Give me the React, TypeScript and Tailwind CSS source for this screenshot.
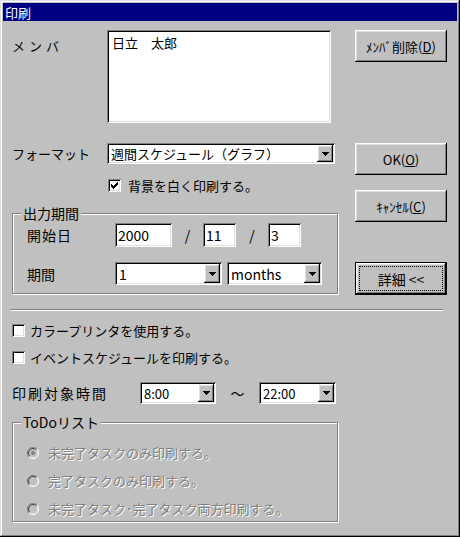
import React from 'react';

const raised =
  'shadow-[inset_-1px_-1px_#000,inset_1px_1px_#fff,inset_-2px_-2px_#808080,inset_2px_2px_#dfdfdf]';
const sunken =
  'shadow-[inset_1px_1px_#808080,inset_-1px_-1px_#fff,inset_2px_2px_#000,inset_-2px_-2px_#dfdfdf]';
const disabledText = 'text-[#808080] [text-shadow:1px_1px_#fff]';

function Arrow() {
  return (
    <svg width="7" height="4" viewBox="0 0 7 4" shapeRendering="crispEdges">
      <path d="M0 0h7v1H0z M1 1h5v1H1z M2 2h3v1H2z M3 3h1v1H3z" fill="#000" />
    </svg>
  );
}

function Combo({ value, className }: { value: string; className: string }) {
  return (
    <div className={`${className} bg-white ${sunken} flex items-stretch p-[2px]`}>
      <span className="flex-1 flex items-center pl-[2px] whitespace-nowrap overflow-hidden">{value}</span>
      <div className={`w-[16px] bg-[#c0c0c0] ${raised} flex items-center justify-center`}>
        <Arrow />
      </div>
    </div>
  );
}

function TextBox({ value, className }: { value: string; className: string }) {
  return (
    <div className={`${className} h-[24px] bg-white ${sunken} flex items-center pl-[3px]`}>{value}</div>
  );
}

function Check({ checked }: { checked?: boolean }) {
  return (
    <div className={`w-[13px] h-[13px] shrink-0 bg-white ${sunken} flex items-center justify-center`}>
      {checked && (
        <svg width="7" height="7" viewBox="0 0 7 7" shapeRendering="crispEdges">
          <path
            d="M0 2h1v3H0z M1 3h1v3H1z M2 4h1v3H2z M3 3h1v3H3z M4 2h1v3H4z M5 1h1v3H5z M6 0h1v3H6z"
            fill="#000"
          />
        </svg>
      )}
    </div>
  );
}

function Radio({ selected }: { selected?: boolean }) {
  return (
    <svg width="12" height="12" viewBox="0 0 12 12" className="shrink-0">
      <circle cx="6" cy="6" r="5.5" fill="#c0c0c0" />
      <path d="M10 2A5.5 5.5 0 0 0 2 10" stroke="#808080" fill="none" strokeWidth="1" />
      <path d="M2 10A5.5 5.5 0 0 0 10 2" stroke="#fff" fill="none" strokeWidth="1" />
      <path d="M9.2 2.8A4.5 4.5 0 0 0 2.8 9.2" stroke="#404040" fill="none" strokeWidth="1" />
      <path d="M2.8 9.2A4.5 4.5 0 0 0 9.2 2.8" stroke="#dfdfdf" fill="none" strokeWidth="1" />
      {selected && <circle cx="6" cy="6" r="2" fill="#808080" />}
    </svg>
  );
}

function Button({ children, className }: { children: React.ReactNode; className?: string }) {
  return (
    <div className={`w-[92px] h-[32px] ${raised} flex items-center justify-center ${className ?? ''}`}>
      {children}
    </div>
  );
}

function Group({ title, className, children }: { title: string; className: string; children: React.ReactNode }) {
  return (
    <div className={`relative border border-[#808080] shadow-[inset_1px_1px_#fff,1px_1px_#fff] ${className}`}>
      <span className="absolute -top-[8px] left-[8px] px-[2px] bg-[#c0c0c0] text-[14px]">{title}</span>
      {children}
    </div>
  );
}

export default function App() {
  return (
    <div className="w-[460px] h-[537px] bg-[#c0c0c0] p-[3px] shadow-[inset_-1px_-1px_#000,inset_1px_1px_#dfdfdf,inset_-2px_-2px_#808080,inset_2px_2px_#fff] font-['Noto_Sans_CJK_JP',sans-serif] text-black text-[13px] leading-none flex flex-col">
      <div className="h-[18px] bg-[#000080] text-white text-[13px] flex items-center pl-[2px]">印刷</div>

      <div className="flex-1 pl-[9px] pt-[9px]">
        {/* upper part: fields + buttons */}
        <div className="flex">
          <div className="w-[326px] flex flex-col">
            <div className="flex">
              <div className="w-[95px] pt-[9px] tracking-[4px]">メンバ</div>
              <div className={`w-[224px] h-[93px] bg-white ${sunken} pl-[5px] pt-[6px]`}>日立　太郎</div>
            </div>
            <div className="flex items-center mt-[20px]">
              <div className="w-[95px]">フォーマット</div>
              <Combo value="週間スケジュール（グラフ）" className="w-[228px] h-[21px]" />
            </div>
            <div className="flex items-center mt-[15px] ml-[96px] gap-[7px]">
              <Check checked />
              <span>背景を白く印刷する。</span>
            </div>
            <Group title="出力期間" className="mt-[21px] h-[81px]">
              <div className="pl-[14px] pt-[9px] flex flex-col gap-[15px] text-[14px]">
                <div className="flex items-center">
                  <div className="w-[88px] tracking-[1px]">開始日</div>
                  <TextBox value="2000" className="w-[57px]" />
                  <div className="w-[31px] text-center">/</div>
                  <TextBox value="11" className="w-[33px]" />
                  <div className="w-[32px] text-center">/</div>
                  <TextBox value="3" className="w-[33px]" />
                </div>
                <div className="flex items-center">
                  <div className="w-[88px]">期間</div>
                  <Combo value="1" className="w-[107px] h-[23px]" />
                  <Combo value="months" className="w-[95px] h-[23px] ml-[5px]" />
                </div>
              </div>
            </Group>
          </div>

          <div className="ml-[17px] w-[92px] flex flex-col">
            <Button>
              ﾒﾝﾊﾞ削除(<u>D</u>)
            </Button>
            <Button className="mt-[81px]">
              OK(<u>O</u>)
            </Button>
            <Button className="mt-[15px]">
              ｷｬﾝｾﾙ(<u>C</u>)
            </Button>
            <div className="mt-[40px] w-[92px] h-[33px] flex p-[4px] shadow-[inset_0_0_0_1px_#000,inset_-2px_-2px_#000,inset_2px_2px_#fff,inset_-3px_-3px_#808080,inset_3px_3px_#dfdfdf]">
              <div className="flex-1 border border-dotted border-black flex items-center justify-center text-[14px]">
                詳細 &lt;&lt;
              </div>
            </div>
          </div>
        </div>

        <div className="mt-[14px] -ml-[2px] w-[433px] h-[2px] border-t border-[#808080] border-b border-b-white" />

        <div className="flex items-center gap-[5px] mt-[13px]">
          <Check />
          <span>カラープリンタを使用する。</span>
        </div>
        <div className="flex items-center gap-[5px] mt-[14px]">
          <Check />
          <span>イベントスケジュールを印刷する。</span>
        </div>

        <div className="flex items-center mt-[18px]">
          <div className="w-[128px] text-[14px] tracking-[2px]">印刷対象時間</div>
          <Combo value="8:00" className="w-[76px] h-[22px]" />
          <div className="w-[43px] text-center text-[14px]">〜</div>
          <Combo value="22:00" className="w-[77px] h-[22px]" />
        </div>

        <Group title="ToDoリスト" className="mt-[18px] w-[326px] h-[100px]">
          <div className={`pl-[14px] pt-[23px] flex flex-col gap-[15px] ${disabledText}`}>
            <div className="flex items-center gap-[9px]">
              <Radio selected />
              <span>未完了タスクのみ印刷する。</span>
            </div>
            <div className="flex items-center gap-[9px]">
              <Radio />
              <span>完了タスクのみ印刷する。</span>
            </div>
            <div className="flex items-center gap-[9px]">
              <Radio />
              <span>未完了タスク･完了タスク両方印刷する。</span>
            </div>
          </div>
        </Group>
      </div>
    </div>
  );
}
